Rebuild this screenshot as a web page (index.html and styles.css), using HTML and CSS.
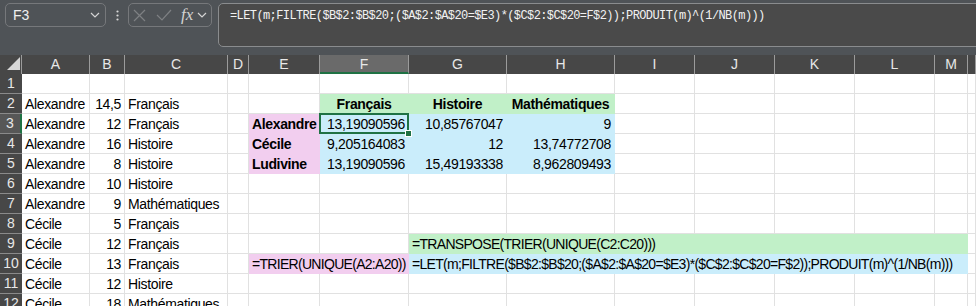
FILE: index.html
```html
<!DOCTYPE html>
<html lang="fr">
<head>
    <meta charset="UTF-8">
    <meta name="viewport" content="width=device-width, initial-scale=1.0">
    <title>Moyennes géométriques</title>
    <link rel="stylesheet" href="styles.css">
</head>
<body>
    <div class="toolbar">
        <div class="name-box">
            <span>F3</span>
            <svg width="10" height="6" viewBox="0 0 10 6"><polyline points="1,1 5,5 9,1" fill="none" stroke="#d4d4d4" stroke-width="1.2"/></svg>
        </div>
        <div class="more">
            <svg width="3" height="11" viewBox="0 0 3 11"><circle cx="1.5" cy="1.5" r="1.1" fill="#d8d8d8"/><circle cx="1.5" cy="5.5" r="1.1" fill="#d8d8d8"/><circle cx="1.5" cy="9.5" r="1.1" fill="#d8d8d8"/></svg>
        </div>
        <div class="fx-box">
            <svg class="icon-cancel" width="13" height="13" viewBox="0 0 13 13"><path d="M1 1 L12 12 M12 1 L1 12" stroke="#7e8083" stroke-width="1.2" fill="none"/></svg>
            <svg class="icon-ok" width="16" height="12" viewBox="0 0 16 12"><polyline points="1,6 6,11 15,1" fill="none" stroke="#7e8083" stroke-width="1.2"/></svg>
            <span class="fx">fx</span>
            <svg width="10" height="6" viewBox="0 0 10 6"><polyline points="1,1 5,5 9,1" fill="none" stroke="#d4d4d4" stroke-width="1.2"/></svg>
        </div>
        <div class="formula-bar">=LET(m;FILTRE($B$2:$B$20;($A$2:$A$20=$E3)*($C$2:$C$20=F$2));PRODUIT(m)^(1/NB(m)))</div>
    </div>

    <div id="sheet" class="sheet"></div>

    <script>
        // N is only a sliver at the right edge, so its letter is not shown
        const columns = ['A', 'B', 'C', 'D', 'E', 'F', 'G', 'H', 'I', 'J', 'K', 'L', 'M', ''];

        // one entry per row, from row 1
        const rows = [
            {},
            { A: 'Alexandre', B: '14,5', C: 'Français', F: ['Français', 'green head'], G: ['Histoire', 'green head'], H: ['Mathématiques', 'green head'] },
            { A: 'Alexandre', B: '12', C: 'Français', E: ['Alexandre', 'pink bold'], F: ['13,19090596', 'blue num selected'], G: ['10,85767047', 'blue num'], H: ['9', 'blue num'] },
            { A: 'Alexandre', B: '16', C: 'Histoire', E: ['Cécile', 'pink bold'], F: ['9,205164083', 'blue num'], G: ['12', 'blue num'], H: ['13,74772708', 'blue num'] },
            { A: 'Alexandre', B: '8', C: 'Histoire', E: ['Ludivine', 'pink bold'], F: ['13,19090596', 'blue num'], G: ['15,49193338', 'blue num'], H: ['8,962809493', 'blue num'] },
            { A: 'Alexandre', B: '10', C: 'Histoire' },
            { A: 'Alexandre', B: '9', C: 'Mathématiques' },
            { A: 'Cécile', B: '5', C: 'Français' },
            { A: 'Cécile', B: '12', C: 'Français', G: ['=TRANSPOSE(TRIER(UNIQUE(C2:C20)))', 'green formula', 7] },
            { A: 'Cécile', B: '13', C: 'Français', E: ['=TRIER(UNIQUE(A2:A20))', 'pink formula', 2], G: ['=LET(m;FILTRE($B$2:$B$20;($A$2:$A$20=$E3)*($C$2:$C$20=F$2));PRODUIT(m)^(1/NB(m)))', 'blue formula', 7] },
            { A: 'Cécile', B: '12', C: 'Histoire' },
            { A: 'Cécile', B: '18', C: 'Mathématiques' }
        ];

        const sheet = document.getElementById('sheet');

        function addCell(className, text) {
            const cell = document.createElement('div');
            cell.className = className;
            if (text) cell.textContent = text;
            sheet.appendChild(cell);
            return cell;
        }

        const corner = addCell('corner');
        corner.innerHTML = '<svg width="22" height="19" viewBox="0 0 22 19"><polygon points="20,2 20,15 7,15" fill="#d6d6d6"/></svg>';

        columns.forEach(function (col) {
            addCell(col === 'F' ? 'col-head active' : 'col-head', col);
        });

        rows.forEach(function (row, index) {
            addCell(index === 2 ? 'row-head active' : 'row-head', String(index + 1));
            let c = 0;
            while (c < columns.length) {
                const col = columns[c];
                let value = row[col];
                let classes = 'cell';
                let span = 1;
                if (col === 'B') classes += ' num';
                if (Array.isArray(value)) {
                    classes += ' ' + value[1];
                    span = value[2] || 1;
                    value = value[0];
                }
                if (span > 1) classes += ' span' + span;
                addCell(classes, value);
                c += span;
            }
        });
    </script>
</body>
</html>
```

FILE: styles.css
```css
body {
    margin: 0;
    background: #fff;
    font-family: "Liberation Sans", Arial, sans-serif;
    overflow: hidden;
}

.toolbar {
    display: flex;
    align-items: flex-start;
    height: 55px;
    padding: 3px 0 0 5px;
    box-sizing: border-box;
    background: #4f5357;
    overflow: hidden;
}

.name-box {
    width: 101px;
    height: 24px;
    box-sizing: border-box;
    border: 1px solid #76787b;
    border-radius: 5px;
    display: flex;
    align-items: center;
    justify-content: space-between;
    padding: 0 5px 0 7px;
    color: #f0f0f0;
    font-size: 14px;
}

.more {
    width: 22px;
    height: 24px;
    display: flex;
    align-items: center;
    justify-content: center;
}

.fx-box {
    width: 84px;
    height: 24px;
    box-sizing: border-box;
    border: 1px solid #76787b;
    border-radius: 5px;
    display: flex;
    align-items: center;
    padding: 0 0 0 4px;
}

.icon-ok {
    margin-left: 10px;
}

.fx {
    margin-left: 9px;
    margin-right: 4px;
    font-family: "Liberation Serif", serif;
    font-style: italic;
    font-size: 17px;
    color: #d2d2d2;
    line-height: 20px;
}

.formula-bar {
    flex: 1;
    height: 44px;
    box-sizing: border-box;
    margin: 0 -10px 0 6px;
    padding: 5px 11px;
    border: 1px solid #8a8c8e;
    border-radius: 5px;
    background: #4a4a4a;
    color: #f2f2f2;
    font-family: "Liberation Mono", monospace;
    font-size: 12px;
    letter-spacing: -0.6px;
    line-height: 14px;
    white-space: nowrap;
}

.sheet {
    display: grid;
    grid-template-columns: 22px 68px 35px 103px 21px 71px 89px 98px 108px 80px 80px 80px 80px 33px 8px;
    grid-template-rows: 19px;
    grid-auto-rows: 20px;
}

.corner {
    background: #474747;
    border-right: 1px solid #9b9b9b;
    box-sizing: border-box;
}

.corner svg {
    display: block;
}

.col-head {
    background: #474747;
    color: #e8e8e8;
    font-size: 14px;
    line-height: 19px;
    text-align: center;
    border-right: 1px solid #9b9b9b;
    box-sizing: border-box;
}

.col-head.active {
    background: #6a6a6a;
    border-bottom: 2px solid #1f7244;
    line-height: 18px;
}

.row-head {
    background: #474747;
    color: #e8e8e8;
    font-size: 14px;
    line-height: 19px;
    text-align: center;
    border-bottom: 1px solid #8a8a8a;
    box-sizing: border-box;
}

.row-head.active {
    background: #575757;
    border-right: 2px solid #1f7244;
}

.cell {
    padding: 2px 3px 0;
    font-size: 14px;
    line-height: 17px;
    letter-spacing: -0.35px;
    color: #000;
    white-space: nowrap;
    border-right: 1px solid #e1e1e1;
    border-bottom: 1px solid #e1e1e1;
    box-sizing: border-box;
}

.num {
    text-align: right;
}

.bold {
    font-weight: bold;
}

.head {
    font-weight: bold;
    text-align: center;
}

.formula {
    letter-spacing: -0.7px;
}

.green {
    background: #c1f0c8;
    border-color: #c1f0c8;
}

.pink {
    background: #f2ceef;
    border-color: #f2ceef;
}

.blue {
    background: #caedfb;
    border-color: #caedfb;
}

.span2 {
    grid-column: span 2;
}

.span7 {
    grid-column: span 7;
}

.selected {
    position: relative;
}

.selected::before {
    content: "";
    position: absolute;
    left: -1px;
    top: -1px;
    right: -1px;
    bottom: -1px;
    border: 2px solid #1f7244;
}

.selected::after {
    content: "";
    position: absolute;
    right: -4px;
    bottom: -4px;
    width: 5px;
    height: 5px;
    background: #1f7244;
    border: 1px solid #fff;
}
```
